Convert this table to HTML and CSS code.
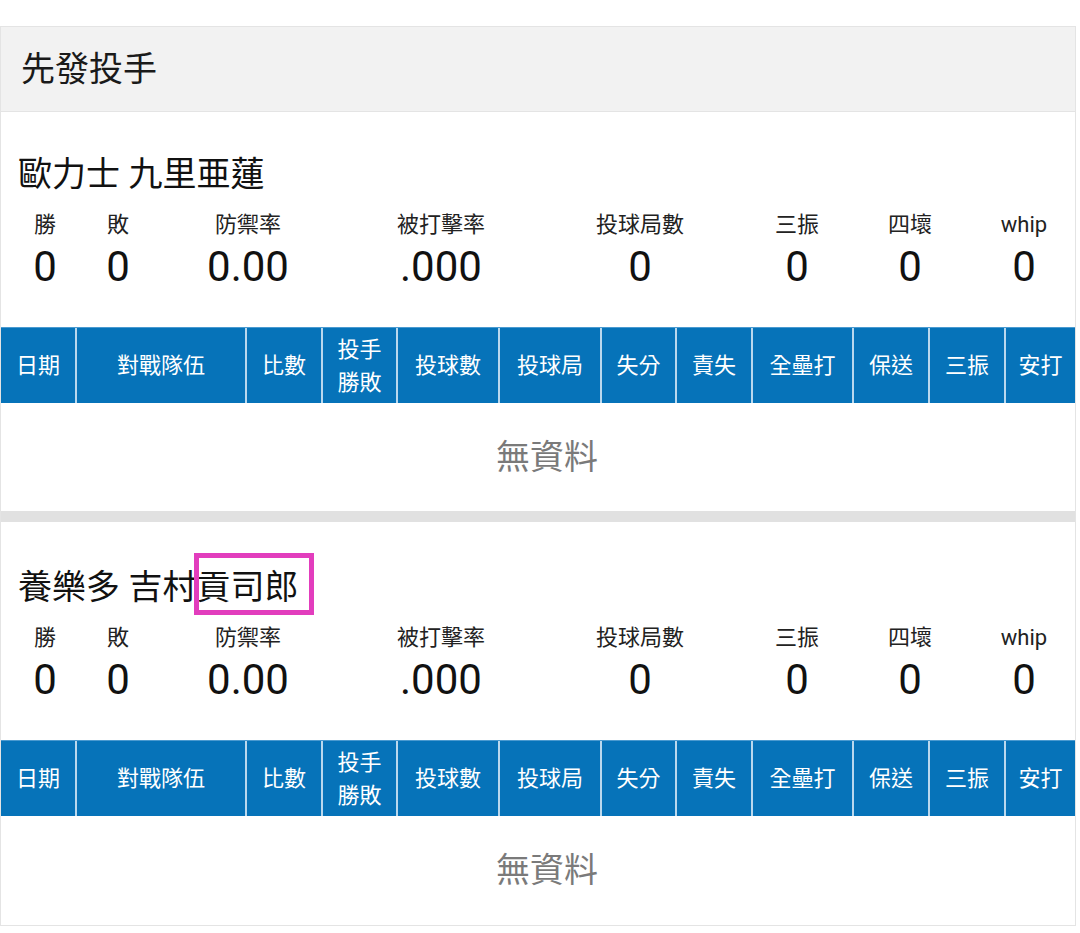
FILE: index.html
```html
<!DOCTYPE html>
<html lang="zh-Hant">
<head>
<meta charset="utf-8">
<title>先發投手</title>
<link rel="stylesheet" href="styles.css">
</head>
<body>
<div class="card">
  <div class="card-head">先發投手</div>

  <section class="pitcher">
    <h2 class="name">歐力士 九里亜蓮</h2>
    <div class="stats">
      <div class="stat"><span class="lab">勝</span><span class="val">0</span></div>
      <div class="stat"><span class="lab">敗</span><span class="val">0</span></div>
      <div class="stat"><span class="lab">防禦率</span><span class="val">0.00</span></div>
      <div class="stat"><span class="lab">被打擊率</span><span class="val">.000</span></div>
      <div class="stat"><span class="lab">投球局數</span><span class="val">0</span></div>
      <div class="stat"><span class="lab">三振</span><span class="val">0</span></div>
      <div class="stat"><span class="lab">四壞</span><span class="val">0</span></div>
      <div class="stat"><span class="lab">whip</span><span class="val">0</span></div>
    </div>
    <div class="grid-head">
      <div class="th">日期</div>
      <div class="th">對戰隊伍</div>
      <div class="th">比數</div>
      <div class="th two">投手<br>勝敗</div>
      <div class="th">投球數</div>
      <div class="th">投球局</div>
      <div class="th">失分</div>
      <div class="th">責失</div>
      <div class="th">全壘打</div>
      <div class="th">保送</div>
      <div class="th">三振</div>
      <div class="th">安打</div>
    </div>
    <div class="empty">無資料</div>
  </section>

  <section class="pitcher">
    <h2 class="name">養樂多 吉村<span class="mark">貢司郎</span></h2>
    <div class="stats">
      <div class="stat"><span class="lab">勝</span><span class="val">0</span></div>
      <div class="stat"><span class="lab">敗</span><span class="val">0</span></div>
      <div class="stat"><span class="lab">防禦率</span><span class="val">0.00</span></div>
      <div class="stat"><span class="lab">被打擊率</span><span class="val">.000</span></div>
      <div class="stat"><span class="lab">投球局數</span><span class="val">0</span></div>
      <div class="stat"><span class="lab">三振</span><span class="val">0</span></div>
      <div class="stat"><span class="lab">四壞</span><span class="val">0</span></div>
      <div class="stat"><span class="lab">whip</span><span class="val">0</span></div>
    </div>
    <div class="grid-head">
      <div class="th">日期</div>
      <div class="th">對戰隊伍</div>
      <div class="th">比數</div>
      <div class="th two">投手<br>勝敗</div>
      <div class="th">投球數</div>
      <div class="th">投球局</div>
      <div class="th">失分</div>
      <div class="th">責失</div>
      <div class="th">全壘打</div>
      <div class="th">保送</div>
      <div class="th">三振</div>
      <div class="th">安打</div>
    </div>
    <div class="empty">無資料</div>
  </section>
</div>
</body>
</html>
```
FILE: styles.css
```css
* { box-sizing: border-box; }
html, body { margin: 0; padding: 0; background: #ffffff; }
body {
  font-family: Roboto, "Noto Sans CJK TC", "Noto Sans CJK SC", sans-serif;
  color: #111;
}
.card {
  margin-top: 26px;
  width: 1076px;
  border: 1px solid #e4e4e4;
}
.card-head {
  height: 85px;
  background: #f2f2f2;
  border-bottom: 1px solid #e4e4e4;
  padding-left: 20px;
  font-size: 34px;
  line-height: 85px;
  color: #1a1a1a;
}
.pitcher {
  padding-top: 38px;
}
.pitcher + .pitcher {
  border-top: 11px solid #e1e1e1;
  padding-top: 41px;
  padding-bottom: 1px;
}
.name {
  margin: 0;
  padding-left: 17px;
  font-size: 34px;
  font-weight: normal;
  line-height: 48px;
  color: #111;
}
.mark {
  position: relative;
}
.mark::after {
  content: "";
  position: absolute;
  left: -2px;
  right: -16px;
  top: -14px;
  bottom: -8px;
  border: 5px solid #e23dbd;
}
.stats {
  margin-top: 12px;
  display: grid;
  grid-template-columns: 88px 58px 202px 184px 214px 100px 126px 102px;
}
.stat {
  display: flex;
  flex-direction: column;
  align-items: center;
}
.lab {
  font-size: 22px;
  line-height: 30px;
  color: #222;
}
.val {
  margin-top: 3px;
  font-size: 42px;
  line-height: 48px;
  color: #111;
}
.grid-head {
  margin-top: 36px;
  display: grid;
  grid-template-columns: 74px 170px 76px 75px 102px 102px 75px 76px 101px 76px 76px 71px;
  height: 76px;
  background: #0673b9;
  border-top: 1px solid #4a9ad0;
}
.th {
  display: flex;
  align-items: center;
  justify-content: center;
  text-align: center;
  color: #ffffff;
  font-size: 22px;
  line-height: 30px;
  border-left: 2px solid #b9d8ee;
}
.th:first-child { border-left: none; }
.th.two { line-height: 33px; }
.empty {
  height: 108px;
  padding-left: 18px;
  padding-bottom: 5px;
  display: flex;
  align-items: center;
  justify-content: center;
  font-size: 34px;
  color: #7a7a7a;
}
```
